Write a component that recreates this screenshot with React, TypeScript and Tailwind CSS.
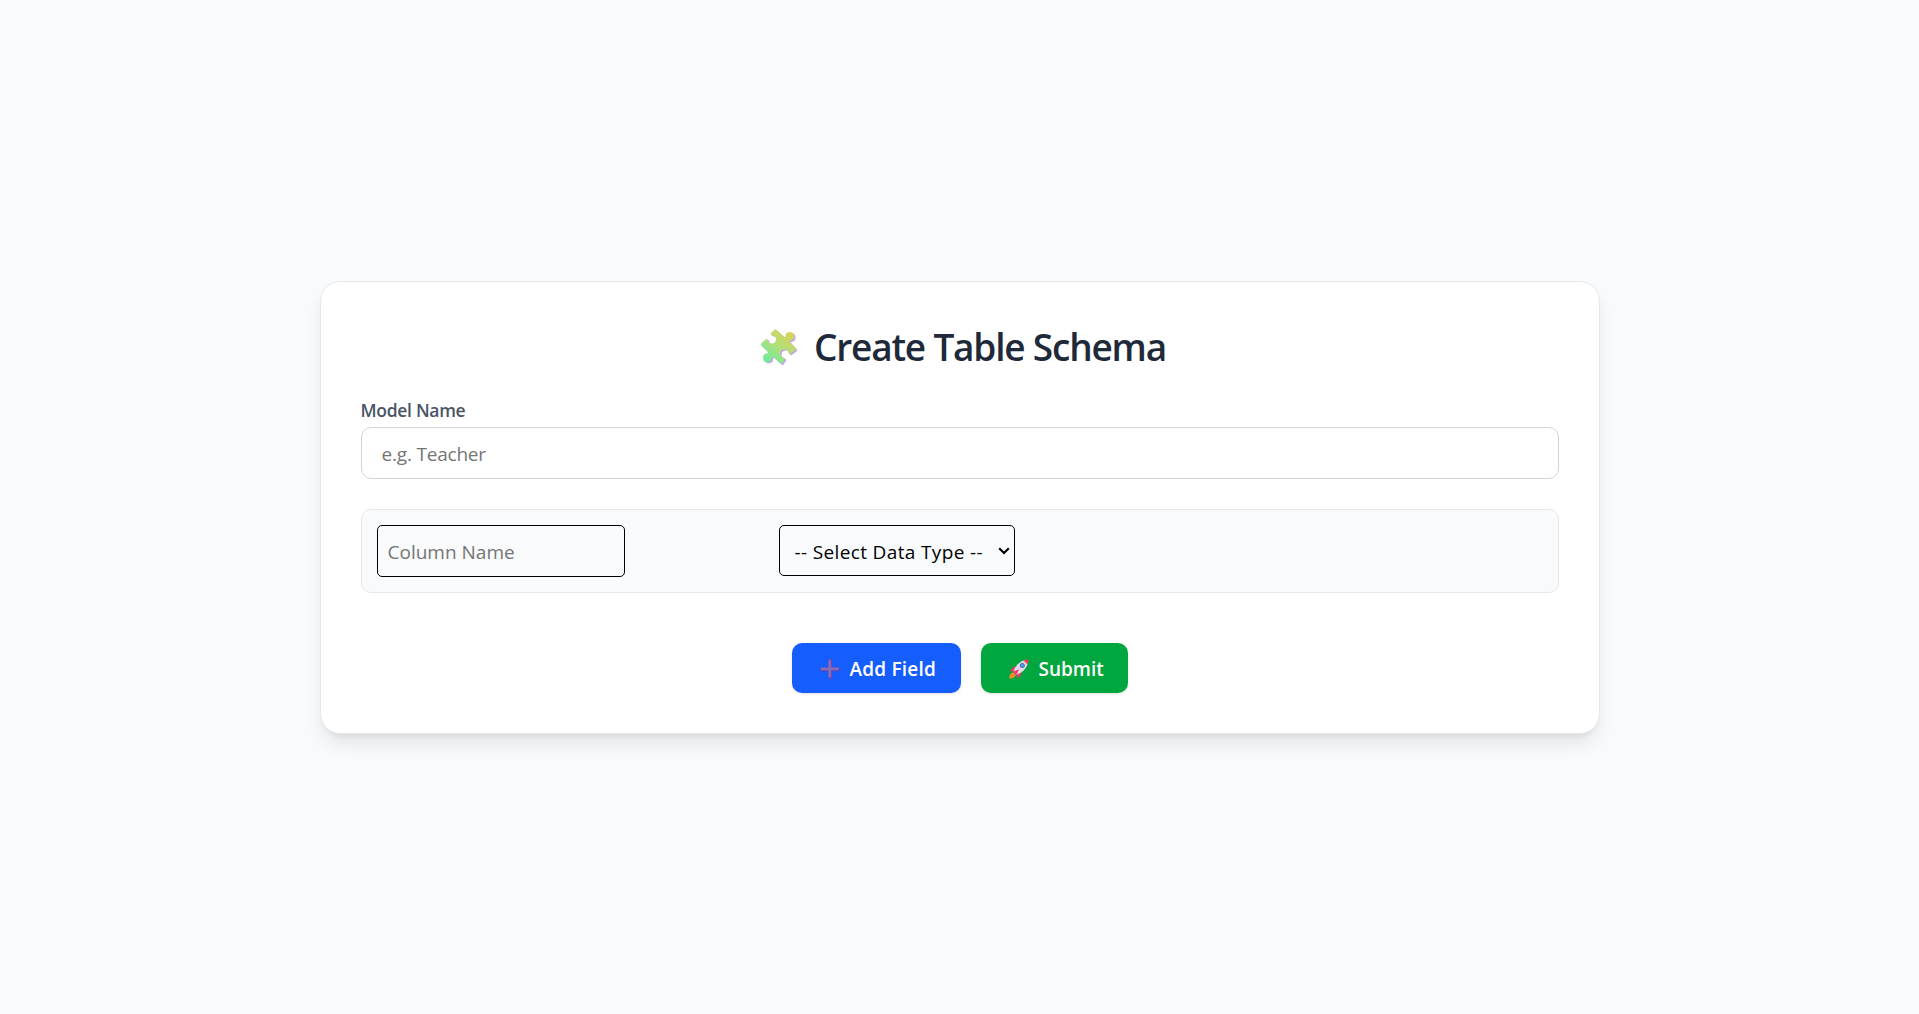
import { useState } from "react";

function PuzzleIcon() {
  return (
    <svg viewBox="0 0 37 37" className="h-[37px] w-[37px] shrink-0" aria-hidden="true">
      <defs>
        <linearGradient id="puzzle" x1="30" y1="3" x2="6" y2="34" gradientUnits="userSpaceOnUse">
          <stop offset="0" stopColor="#d8d458" />
          <stop offset="0.5" stopColor="#aee07a" />
          <stop offset="1" stopColor="#68ee9c" />
        </linearGradient>
      </defs>
      <g transform="translate(1.3 1.2)" fill="#c3a2ea">
        <PuzzleShape />
      </g>
      <g fill="url(#puzzle)">
        <PuzzleShape />
      </g>
    </svg>
  );
}

function PuzzleShape() {
  return (
    <path d="M14.6 0.6Q15.5 0 16.4 0.8L24.3 7.9Q25.4 8.7 25.4 6.8A4.4 4.4 0 1 1 30.6 11.6Q28.8 11.9 29.8 12.9L35.6 19.2Q36.3 20.1 35.4 21L30.5 24.7Q29.2 25.6 28.7 24.1A4.2 4.2 0 1 0 23.4 28.5Q25.2 28.8 25 30.2L21.9 34.6Q21.2 35.4 20.4 34.6L13.5 28.2Q12.2 27.1 11.8 29A4.4 4.4 0 1 1 6.6 24.4Q8.8 24 7.6 22.6L1 16.2Q0.4 15.4 1.2 14.5L5.6 10.2Q7.1 9 7.8 10.9A4.1 4.1 0 1 0 12.9 6.4Q9.7 6 10.7 4.4Z" />
  );
}

function PlusIcon() {
  return (
    <svg viewBox="0 0 20 20" className="h-5 w-5 shrink-0" aria-hidden="true">
      <path d="M10.2 2v16M2 10.2h16" stroke="#713bb5" strokeWidth="3.9" strokeLinecap="round" />
      <path d="M9.8 1.8v15.6M1.8 9.8h16" stroke="#7d72ba" strokeWidth="2.7" strokeLinecap="round" />
    </svg>
  );
}

function RocketIcon() {
  return (
    <svg viewBox="0 0 20 20" className="h-5 w-5 shrink-0" aria-hidden="true">
      <path d="M4.2 13.2Q0 14.6 .3 19.6Q5.2 20 7 15.8Z" fill="#f58a2c" />
      <path d="M7.5 7.2Q4.3 7.3 .8 12L6 12.4ZM12.7 12.5Q12.8 15.7 8.5 19.4L7.6 14Z" fill="#f0386f" />
      <path d="M4.4 13.3Q6.3 4.3 15.6 1.2L18.9 4.5Q15.7 13.5 6.8 15.8Z" fill="#e2dce8" />
      <path d="M14.4 1.7Q16.8.4 19.7.4Q19.7 3.2 18.3 5.8Q17.1 3 14.4 1.7Z" fill="#f23b58" />
      <path d="M3.7 12.8L10.2 10.2L7 16.3Z" fill="#f0386f" />
      <circle cx="13.3" cy="6.5" r="2.5" fill="#5968a0" />
      <circle cx="13.3" cy="6.5" r="1.8" fill="#479af0" />
    </svg>
  );
}

export default function App() {
  const [modelName, setModelName] = useState("");
  const [columnName, setColumnName] = useState("");

  return (
    <div className="flex min-h-screen items-center justify-center bg-gray-50 pt-px font-['Open_Sans',sans-serif]">
      <div className="w-[1280px] rounded-[20px] border border-gray-200 bg-white p-10 shadow-[0_12px_19px_-4px_rgba(0,0,0,0.1),0_5px_7px_-5px_rgba(0,0,0,0.1)]">
        <h1 className="mb-[29px] flex h-[46px] items-center justify-center gap-[17px] pt-1 pl-[7px] text-[37px] font-[550] tracking-[-1.2px] text-gray-800">
          <PuzzleIcon />
          <span className="-mt-px">Create Table Schema</span>
        </h1>

        <div className="mb-[30px]">
          <label htmlFor="model" className="mb-1 block h-[26px] pt-px text-[17.5px] leading-[25px] font-[560] tracking-[-0.3px] text-gray-600">
            Model Name
          </label>
          <input
            id="model"
            value={modelName}
            onChange={(e) => setModelName(e.target.value)}
            placeholder="e.g. Teacher"
            className="block h-[52px] w-full rounded-[10px] border border-gray-300 px-5 pt-px text-[19px] tracking-[-0.2px] outline-none placeholder:text-[#757575]"
          />
        </div>

        <div className="mb-[50px] grid h-[84px] grid-cols-3 items-start gap-10 rounded-[10px] border border-gray-200 bg-gray-50 p-[15px]">
          <input
            value={columnName}
            onChange={(e) => setColumnName(e.target.value)}
            placeholder="Column Name"
            className="h-[52px] w-[248px] rounded-[5px] border border-black px-2.5 pt-px text-[19px] outline-none placeholder:text-[#757575]"
          />
          <div className="relative w-[236px]">
            <select className="block h-[51px] w-full appearance-none rounded-[5px] border border-black pt-1 pl-[15px] text-[19px] tracking-[0.36px] text-black">
              <option>-- Select Data Type --</option>
              <option>String</option>
              <option>Number</option>
              <option>Boolean</option>
              <option>Date</option>
            </select>
            <svg viewBox="0 0 12 8" className="pointer-events-none absolute top-[22px] right-[5px] h-2 w-3" fill="none" stroke="#000" strokeWidth="2.1" aria-hidden="true">
              <path d="M1.2 1.2L6 6L10.8 1.2" />
            </svg>
          </div>
        </div>

        <div className="flex justify-center gap-5">
          <button className="flex h-[50px] w-[169px] items-center gap-2.5 rounded-[10px] bg-blue-600 pt-0.5 pl-7 text-[19px] font-semibold tracking-[0.2px] whitespace-nowrap text-white shadow-sm">
            <PlusIcon />
            <span>Add Field</span>
          </button>
          <button className="flex h-[50px] w-[147px] items-center gap-2.5 rounded-[10px] bg-green-600 pt-0.5 pl-7 text-[19px] font-semibold whitespace-nowrap text-white shadow-sm">
            <RocketIcon />
            <span>Submit</span>
          </button>
        </div>
      </div>
    </div>
  );
}
